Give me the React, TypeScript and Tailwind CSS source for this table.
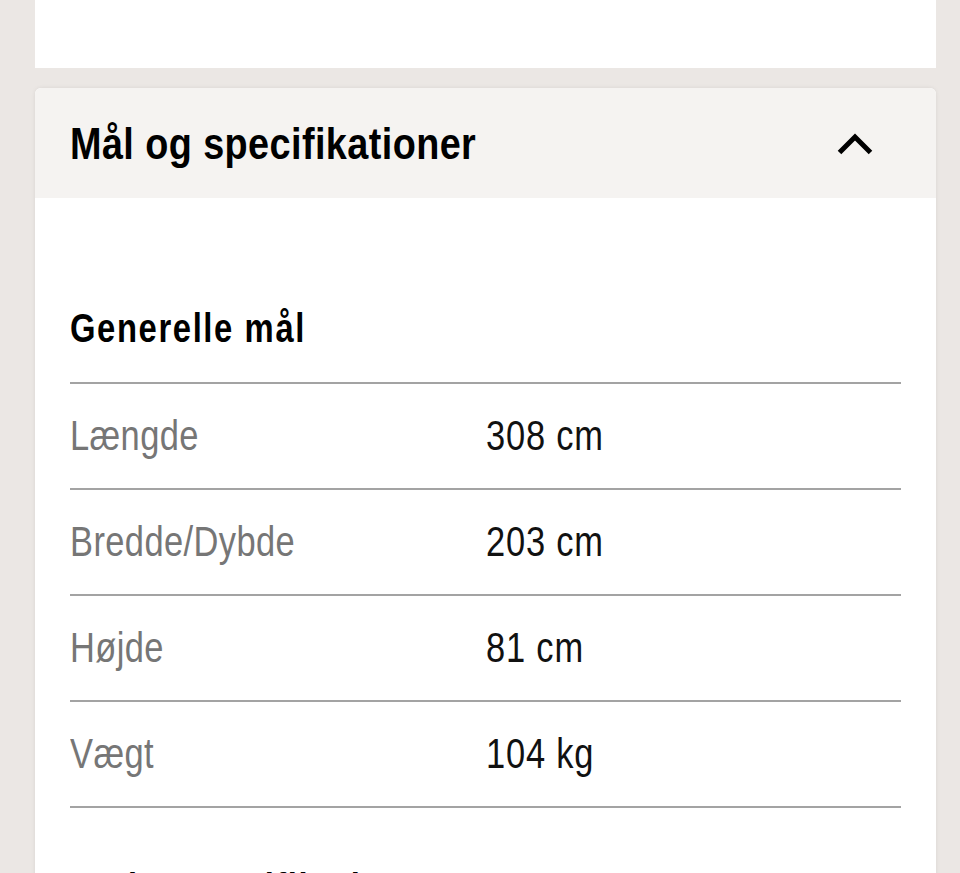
import React from "react";

const rows = [
  { label: "Længde", value: "308 cm" },
  { label: "Bredde/Dybde", value: "203 cm" },
  { label: "Højde", value: "81 cm" },
  { label: "Vægt", value: "104 kg" },
];

export default function App() {
  const font = { fontFamily: '"Liberation Sans", Arial, sans-serif' };
  return (
    <div className="h-[873px] w-[960px] overflow-hidden bg-[#ebe7e4]" style={font}>
      <div className="ml-[35px] mr-[24px] h-[68px] bg-white" />
      <div className="ml-[35px] mr-[24px] mt-[20px] overflow-hidden rounded-t-[6px] bg-white shadow-[0_0_4px_rgba(0,0,0,0.08)]">
        <div className="flex h-[110px] items-center justify-between bg-[#f5f3f1] pl-[35px] pr-[63px]">
          <h2 className="inline-block origin-left scale-x-[0.84] whitespace-nowrap text-[45px] font-bold leading-none tracking-[0.5px] text-black">
            Mål og specifikationer
          </h2>
          <svg width="36" height="22" viewBox="0 0 36 22" className="mt-[2px] shrink-0">
            <path d="M2.5 19.5 L18 4 L33.5 19.5" fill="none" stroke="#000" strokeWidth="5" />
          </svg>
        </div>
        <div className="px-[35px] pt-[108px]">
          <h3 className="origin-left scale-x-[0.8] whitespace-nowrap pb-[32px] text-[41px] font-bold leading-[44px] tracking-[2px] text-black">
            Generelle mål
          </h3>
          <div className="border-t-2 border-[#a3a3a3]">
            {rows.map((r) => (
              <div key={r.label} className="flex h-[106px] items-center border-b-2 border-[#a3a3a3]">
                <div className="w-[416px]">
                  <span className="inline-block origin-left scale-x-[0.82] whitespace-nowrap text-[42px] leading-none tracking-[0.5px] text-[#767676]">
                    {r.label}
                  </span>
                </div>
                <span className="inline-block origin-left scale-x-[0.82] whitespace-nowrap text-[42px] leading-none tracking-[1px] text-[#111111]">
                  {r.value}
                </span>
              </div>
            ))}
          </div>
          <h3 className="origin-left scale-x-[0.8] whitespace-nowrap pt-[58px] text-[41px] font-bold leading-[44px] tracking-[2px] text-black">
            Andre specifikationer
          </h3>
          <div className="h-[200px]" />
        </div>
      </div>
    </div>
  );
}
